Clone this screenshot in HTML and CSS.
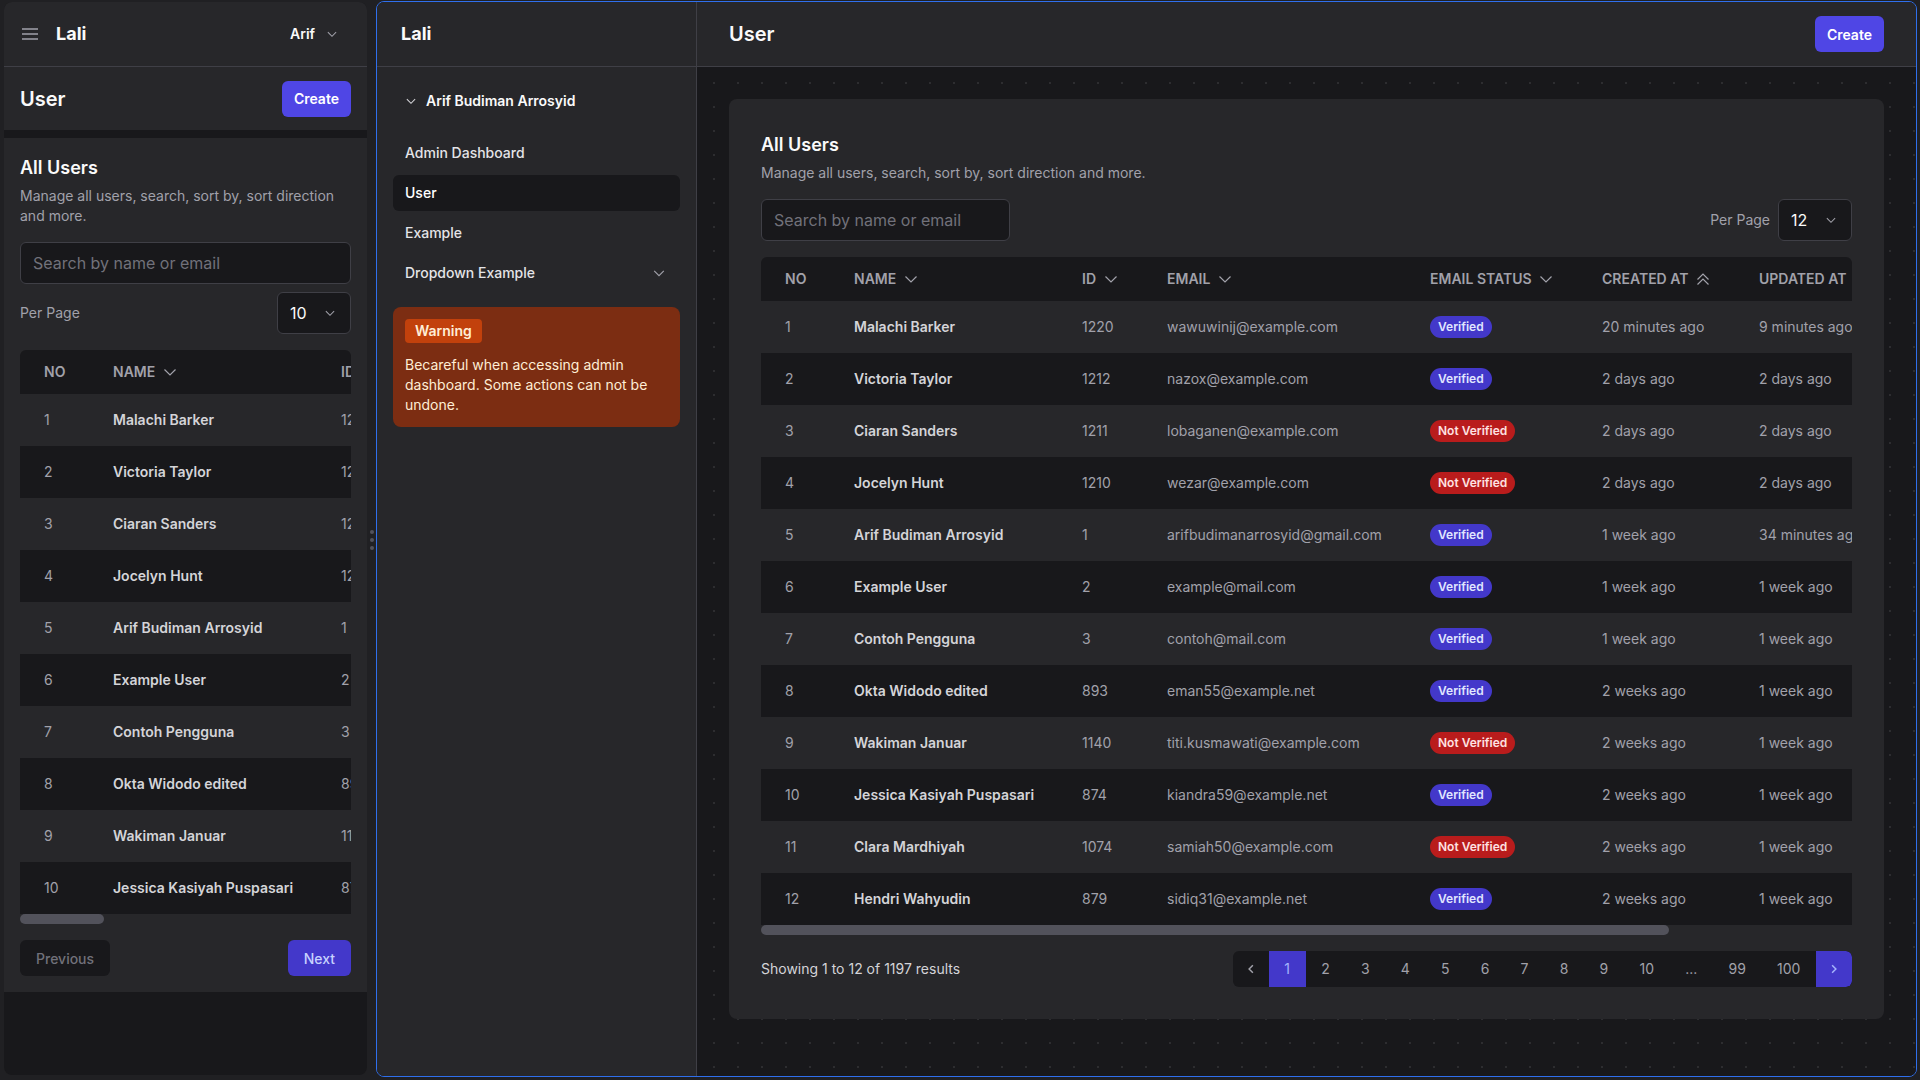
FILE: index.html
```html
<!DOCTYPE html>
<html lang="en">
<head>
<meta charset="utf-8">
<title>Lali - User</title>
<link rel="stylesheet" href="styles.css">
</head>
<body>
<div class="app">
  <section class="mobile">
    <header class="topbar">
      <div class="brand">
        <svg class="burger" width="16" height="12" viewBox="0 0 16 12"><path d="M0 1h16M0 6h16M0 11h16" stroke="#a1a1aa" stroke-width="1.4" fill="none"/></svg>
        <span class="logo">Lali</span>
      </div>
      <div class="account">Arif <svg width="12" height="12" viewBox="0 0 16 16"><path d="M2.5 5.5 8 11l5.5-5.5" stroke="#a1a1aa" stroke-width="1.4" fill="none"/></svg></div>
    </header>
    <div class="page-head m-head">
      <h1>User</h1>
      <button class="btn-create">Create</button>
    </div>
    <div class="card m-card">
      <h2>All Users</h2>
      <p class="sub">Manage all users, search, sort by, sort direction and more.</p>
      <div class="search m-search">Search by name or email</div>
      <div class="perpage m-perpage">
        <span>Per Page</span>
        <div class="select">10 <svg width="12" height="12" viewBox="0 0 16 16"><path d="M2.5 5.5 8 11l5.5-5.5" stroke="#a1a1aa" stroke-width="1.4" fill="none"/></svg></div>
      </div>
      <div class="table-wrap">
        <table class="users m-users">
          <colgroup><col class="c-no"><col class="c-name"><col class="c-id"></colgroup>
          <thead><tr><th>NO</th><th>NAME <svg class="sort" width="16" height="16" viewBox="0 0 16 16"><path d="M2.5 5.5 8 11l5.5-5.5"/></svg></th><th>ID</th></tr></thead>
          <tbody>
            <tr><td>1</td><td class="nm">Malachi Barker</td><td>1220</td></tr>
            <tr><td>2</td><td class="nm">Victoria Taylor</td><td>1212</td></tr>
            <tr><td>3</td><td class="nm">Ciaran Sanders</td><td>1211</td></tr>
            <tr><td>4</td><td class="nm">Jocelyn Hunt</td><td>1210</td></tr>
            <tr><td>5</td><td class="nm">Arif Budiman Arrosyid</td><td>1</td></tr>
            <tr><td>6</td><td class="nm">Example User</td><td>2</td></tr>
            <tr><td>7</td><td class="nm">Contoh Pengguna</td><td>3</td></tr>
            <tr><td>8</td><td class="nm">Okta Widodo edited</td><td>893</td></tr>
            <tr><td>9</td><td class="nm">Wakiman Januar</td><td>1140</td></tr>
            <tr><td>10</td><td class="nm">Jessica Kasiyah Puspasari</td><td>874</td></tr>
          </tbody>
        </table>
      </div>
      <div class="scrollbar"><div class="thumb m-thumb"></div></div>
      <div class="m-pager">
        <button class="btn-prev">Previous</button>
        <button class="btn-next">Next</button>
      </div>
    </div>
  </section>

  <div class="resizer"><span></span><span></span><span></span></div>

  <section class="desktop">
    <aside class="sidebar">
      <div class="side-head"><span class="logo">Lali</span></div>
      <nav class="nav">
        <div class="group-head"><svg width="12" height="12" viewBox="0 0 16 16"><path d="M2.5 5.5 8 11l5.5-5.5" stroke="#d4d4d8" stroke-width="1.4" fill="none"/></svg><span>Arif Budiman Arrosyid</span></div>
        <div class="nav-item">Admin Dashboard</div>
        <div class="nav-item active">User</div>
        <div class="nav-item">Example</div>
        <div class="nav-item">Dropdown Example <svg width="14" height="14" viewBox="0 0 16 16"><path d="M2.5 5.5 8 11l5.5-5.5" stroke="#a1a1aa" stroke-width="1.3" fill="none"/></svg></div>
        <div class="warning">
          <span class="warn-badge">Warning</span>
          <p>Becareful when accessing admin dashboard. Some actions can not be undone.</p>
        </div>
      </nav>
    </aside>
    <div class="main">
      <header class="page-head d-head">
        <h1>User</h1>
        <button class="btn-create">Create</button>
      </header>
      <div class="content">
        <div class="card d-card">
          <h2>All Users</h2>
          <p class="sub">Manage all users, search, sort by, sort direction and more.</p>
          <div class="toolbar">
            <div class="search d-search">Search by name or email</div>
            <div class="perpage d-perpage">
              <span>Per Page</span>
              <div class="select">12 <svg width="12" height="12" viewBox="0 0 16 16"><path d="M2.5 5.5 8 11l5.5-5.5" stroke="#a1a1aa" stroke-width="1.4" fill="none"/></svg></div>
            </div>
          </div>
          <div class="table-wrap">
            <table class="users d-users">
              <colgroup><col class="c-no"><col class="c-name"><col class="c-id"><col class="c-email"><col class="c-status"><col class="c-created"><col class="c-updated"></colgroup>
              <thead><tr><th>NO</th><th>NAME <svg class="sort" width="16" height="16" viewBox="0 0 16 16"><path d="M2.5 5.5 8 11l5.5-5.5"/></svg></th><th>ID <svg class="sort" width="16" height="16" viewBox="0 0 16 16"><path d="M2.5 5.5 8 11l5.5-5.5"/></svg></th><th>EMAIL <svg class="sort" width="16" height="16" viewBox="0 0 16 16"><path d="M2.5 5.5 8 11l5.5-5.5"/></svg></th><th>EMAIL STATUS <svg class="sort" width="16" height="16" viewBox="0 0 16 16"><path d="M2.5 5.5 8 11l5.5-5.5"/></svg></th><th>CREATED AT <svg class="sort" width="16" height="16" viewBox="0 0 16 16"><path d="M2.5 8.5 8 3l5.5 5.5M2.5 13.5 8 8l5.5 5.5"/></svg></th><th>UPDATED AT</th></tr></thead>
              <tbody>
                <tr><td>1</td><td class="nm">Malachi Barker</td><td>1220</td><td>wawuwinij@example.com</td><td><span class="badge ok">Verified</span></td><td>20 minutes ago</td><td>9 minutes ago</td></tr>
                <tr><td>2</td><td class="nm">Victoria Taylor</td><td>1212</td><td>nazox@example.com</td><td><span class="badge ok">Verified</span></td><td>2 days ago</td><td>2 days ago</td></tr>
                <tr><td>3</td><td class="nm">Ciaran Sanders</td><td>1211</td><td>lobaganen@example.com</td><td><span class="badge no">Not Verified</span></td><td>2 days ago</td><td>2 days ago</td></tr>
                <tr><td>4</td><td class="nm">Jocelyn Hunt</td><td>1210</td><td>wezar@example.com</td><td><span class="badge no">Not Verified</span></td><td>2 days ago</td><td>2 days ago</td></tr>
                <tr><td>5</td><td class="nm">Arif Budiman Arrosyid</td><td>1</td><td>arifbudimanarrosyid@gmail.com</td><td><span class="badge ok">Verified</span></td><td>1 week ago</td><td>34 minutes ago</td></tr>
                <tr><td>6</td><td class="nm">Example User</td><td>2</td><td>example@mail.com</td><td><span class="badge ok">Verified</span></td><td>1 week ago</td><td>1 week ago</td></tr>
                <tr><td>7</td><td class="nm">Contoh Pengguna</td><td>3</td><td>contoh@mail.com</td><td><span class="badge ok">Verified</span></td><td>1 week ago</td><td>1 week ago</td></tr>
                <tr><td>8</td><td class="nm">Okta Widodo edited</td><td>893</td><td>eman55@example.net</td><td><span class="badge ok">Verified</span></td><td>2 weeks ago</td><td>1 week ago</td></tr>
                <tr><td>9</td><td class="nm">Wakiman Januar</td><td>1140</td><td>titi.kusmawati@example.com</td><td><span class="badge no">Not Verified</span></td><td>2 weeks ago</td><td>1 week ago</td></tr>
                <tr><td>10</td><td class="nm">Jessica Kasiyah Puspasari</td><td>874</td><td>kiandra59@example.net</td><td><span class="badge ok">Verified</span></td><td>2 weeks ago</td><td>1 week ago</td></tr>
                <tr><td>11</td><td class="nm">Clara Mardhiyah</td><td>1074</td><td>samiah50@example.com</td><td><span class="badge no">Not Verified</span></td><td>2 weeks ago</td><td>1 week ago</td></tr>
                <tr><td>12</td><td class="nm">Hendri Wahyudin</td><td>879</td><td>sidiq31@example.net</td><td><span class="badge ok">Verified</span></td><td>2 weeks ago</td><td>1 week ago</td></tr>
              </tbody>
            </table>
          </div>
          <div class="scrollbar"><div class="thumb d-thumb"></div></div>
          <div class="footer">
            <span class="showing">Showing 1 to 12 of 1197 results</span>
            <div class="pager">
              <span class="pg arrow"><svg width="12" height="12" viewBox="0 0 16 16"><path d="M10.5 3 5.5 8l5 5" stroke="#a1a1aa" stroke-width="2" fill="none"/></svg></span>
              <span class="pg current">1</span>
              <span class="pg">2</span>
              <span class="pg">3</span>
              <span class="pg">4</span>
              <span class="pg">5</span>
              <span class="pg">6</span>
              <span class="pg">7</span>
              <span class="pg">8</span>
              <span class="pg">9</span>
              <span class="pg">10</span>
              <span class="pg">...</span>
              <span class="pg">99</span>
              <span class="pg">100</span>
              <span class="pg arrow next"><svg width="12" height="12" viewBox="0 0 16 16"><path d="M5.5 3l5 5-5 5" stroke="#a5b4fc" stroke-width="2" fill="none"/></svg></span>
            </div>
          </div>
        </div>
      </div>
    </div>
  </section>
</div>
</body>
</html>
```

FILE: styles.css
```css
* { box-sizing: border-box; margin: 0; padding: 0; }

body {
  background: #202023;
  font-family: Inter, "Noto Sans", sans-serif;
  color: #fafafa;
  font-size: 14px;
  line-height: 20px;
  width: 1920px;
  height: 1080px;
  overflow: hidden;
}

button { font-family: inherit; border: 0; cursor: pointer; }

.app {
  display: flex;
  align-items: flex-start;
  height: 1080px;
}

/* ---------- mobile preview ---------- */
.mobile {
  margin: 2px 0 0 4px;
  width: 363px;
  height: 1073px;
  background: #18181b;
  border-radius: 8px;
  overflow: hidden;
  display: flex;
  flex-direction: column;
  flex-shrink: 0;
}

.topbar {
  height: 65px;
  background: #27272a;
  border-bottom: 1px solid #3f3f46;
  display: flex;
  align-items: center;
  justify-content: space-between;
  padding: 0 29px 0 18px;
}

.brand { display: flex; align-items: center; gap: 18px; }
.burger { display: block; }

.logo { font-size: 18px; font-weight: 700; line-height: 28px; color: #fafafa; }

.account {
  display: flex;
  align-items: center;
  gap: 11px;
  font-weight: 600;
  color: #fafafa;
}
.account svg { display: block; }

.page-head {
  display: flex;
  align-items: center;
  justify-content: space-between;
  background: #27272a;
}
.page-head h1 { font-size: 20px; line-height: 28px; font-weight: 600; color: #fafafa; }

.m-head { height: 63px; padding: 0 16px; }

.btn-create {
  height: 36px;
  padding: 0 12px;
  border-radius: 6px;
  background: #4f46e5;
  color: #fff;
  font-size: 14px;
  font-weight: 600;
}

.card { background: #27272a; }
.card h2 { font-size: 18px; line-height: 28px; font-weight: 600; color: #fafafa; }
.card .sub { margin-top: 4px; color: #a1a1aa; }

.m-card { margin-top: 8px; padding: 16px; }

.search {
  height: 42px;
  display: flex;
  align-items: center;
  padding: 0 12px;
  background: #18181b;
  border: 1px solid #3f3f46;
  border-radius: 6px;
  color: #71717a;
  font-size: 16px;
}
.m-search { margin-top: 16px; }

.perpage {
  display: flex;
  align-items: center;
  justify-content: space-between;
  color: #a1a1aa;
}
.m-perpage { margin-top: 8px; }

.select {
  width: 74px;
  height: 42px;
  display: flex;
  align-items: center;
  justify-content: space-between;
  padding: 0 14px 0 12px;
  background: #18181b;
  border: 1px solid #3f3f46;
  border-radius: 6px;
  color: #fafafa;
  font-size: 16px;
}
.select svg { display: block; }

/* ---------- table ---------- */
.table-wrap {
  margin-top: 16px;
  overflow: hidden;
  border-radius: 6px 6px 0 0;
}

.scrollbar { height: 10px; }
.thumb { height: 10px; background: #52525b; border-radius: 5px; }
.m-thumb { width: 84px; }
.d-thumb { width: 908px; }

.users {
  table-layout: fixed;
  border-collapse: collapse;
  white-space: nowrap;
}
.m-users { width: 382px; }
.d-users { width: 1134px; }
.c-no { width: 69px; }
.c-name { width: 228px; }
.c-id { width: 85px; }
.c-email { width: 263px; }
.c-status { width: 172px; }
.c-created { width: 157px; }
.c-updated { width: 160px; }

.users th {
  height: 44px;
  background: #18181b;
  text-align: left;
  padding-left: 24px;
  font-weight: 600;
  color: #a1a1aa;
  overflow: hidden;
}
.users th .sort {
  vertical-align: -3px;
  margin-left: 3px;
  fill: none;
  stroke: #a1a1aa;
  stroke-width: 1.2;
}
.users td {
  height: 52px;
  padding-left: 24px;
  color: #a1a1aa;
  overflow: hidden;
}
.users tbody tr:nth-child(odd) td { background: #27272a; }
.users tbody tr:nth-child(even) td { background: #18181b; }
.users td.nm { font-weight: 600; color: #d4d4d8; }

.badge {
  display: inline-block;
  padding: 2px 8px;
  border-radius: 999px;
  font-size: 12px;
  line-height: 18px;
  font-weight: 600;
}
.badge.ok { background: #4338ca; color: #e0e7ff; }
.badge.no { background: #b91c1c; color: #fee2e2; }

.m-pager {
  margin-top: 16px;
  display: flex;
  justify-content: space-between;
}
.btn-prev, .btn-next {
  height: 36px;
  padding: 0 16px;
  border-radius: 6px;
  font-size: 14px;
  font-weight: 500;
}
.btn-prev { background: #18181b; color: #71717a; }
.btn-next { background: #4338ca; color: #c7d2fe; }

/* ---------- resizer ---------- */
.resizer {
  width: 9px;
  height: 1080px;
  display: flex;
  flex-direction: column;
  align-items: center;
  justify-content: center;
  gap: 4px;
  flex-shrink: 0;
}
.resizer span { width: 4px; height: 4px; border-radius: 50%; background: #52525b; }

/* ---------- desktop preview ---------- */
.desktop {
  margin-top: 1px;
  width: 1541px;
  height: 1076px;
  border: 1px solid #2f6fed;
  border-radius: 8px;
  overflow: hidden;
  display: flex;
  flex-shrink: 0;
}

.sidebar {
  width: 320px;
  flex-shrink: 0;
  background: #27272a;
  border-right: 1px solid #3f3f46;
}
.side-head {
  height: 65px;
  border-bottom: 1px solid #3f3f46;
  display: flex;
  align-items: center;
  padding-left: 24px;
}
.nav { padding: 16px; }
.group-head {
  height: 36px;
  display: flex;
  align-items: center;
  gap: 9px;
  padding: 0 12px;
  font-weight: 600;
  color: #fafafa;
  margin-bottom: 16px;
}
.group-head svg { display: block; }
.nav-item {
  height: 36px;
  display: flex;
  align-items: center;
  justify-content: space-between;
  padding: 0 12px 0 12px;
  border-radius: 6px;
  color: #e4e4e7;
  font-weight: 500;
  margin-bottom: 4px;
}
.nav-item svg { display: block; margin-right: 2px; }
.nav-item.active { background: #18181b; color: #fff; }

.warning {
  margin-top: 16px;
  padding: 12px;
  border-radius: 8px;
  background: #7c2d12;
}
.warn-badge {
  display: inline-block;
  height: 24px;
  line-height: 24px;
  padding: 0 10px;
  border-radius: 4px;
  background: #c2410c;
  color: #ffedd5;
  font-weight: 600;
}
.warning p { margin-top: 12px; color: #ffedd5; }

.main {
  flex: 1;
  display: flex;
  flex-direction: column;
  min-width: 0;
}
.d-head {
  height: 65px;
  padding: 0 32px;
  border-bottom: 1px solid #3f3f46;
}

.content {
  flex: 1;
  padding: 32px;
  background-color: #18181b;
  background-image: radial-gradient(circle, rgba(255,255,255,0.09) 1px, transparent 1.4px);
  background-size: 24px 24px;
  background-position: 5px 4px;
}

.d-card {
  padding: 32px;
  border-radius: 8px;
}

.toolbar {
  margin-top: 16px;
  display: flex;
  align-items: center;
  justify-content: space-between;
}
.d-search { width: 249px; }
.d-perpage { gap: 8px; }

.footer {
  margin-top: 16px;
  display: flex;
  align-items: center;
  justify-content: space-between;
}
.showing { color: #d4d4d8; }

.pager {
  display: flex;
  height: 36px;
  background: #18181b;
  border-radius: 6px;
  overflow: hidden;
}
.pg {
  height: 36px;
  display: flex;
  align-items: center;
  justify-content: center;
  padding: 0 15.6px;
  color: #a1a1aa;
}
.pg.arrow { padding: 0 12px; }
.pg.current { background: #4338ca; color: #a5b4fc; }
.pg.next { background: #4338ca; border-radius: 0 6px 6px 0; }
.pg svg { display: block; }
```
